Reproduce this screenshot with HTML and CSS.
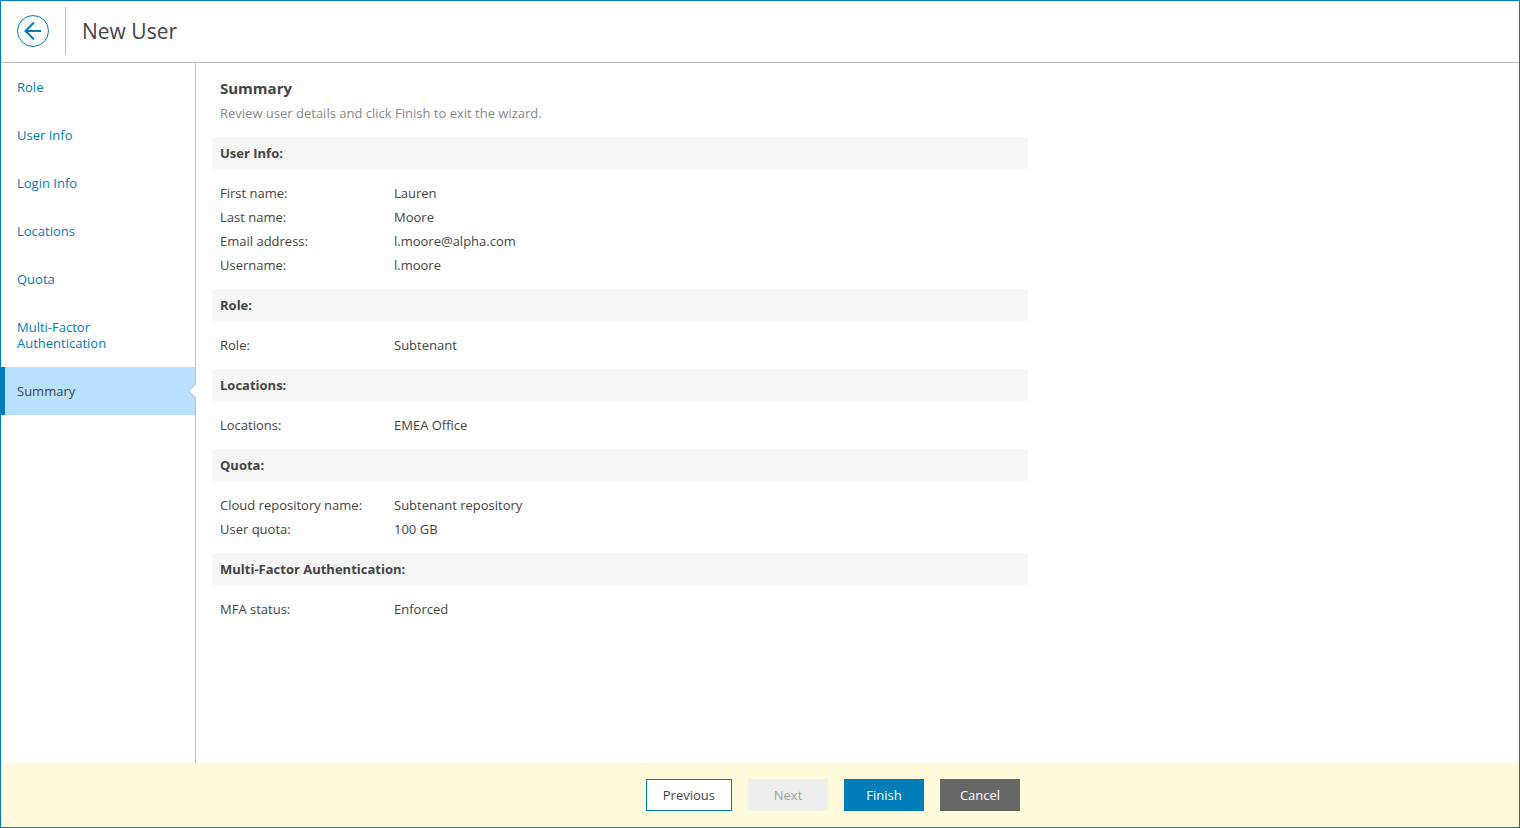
FILE: index.html
```html
<!DOCTYPE html>
<html lang="en">
<head>
  <meta charset="UTF-8" />
  <meta name="viewport" content="width=device-width, initial-scale=1.0" />
  <title>New User</title>
  <link rel="stylesheet" href="styles.css">
</head>
<body>
  <div class="wizard">
    <header class="wizard-header">
      <button type="button" class="back-btn" aria-label="Back">
        <svg width="32" height="32" viewBox="0 0 32 32" fill="none" stroke="currentColor">
          <circle cx="16" cy="16" r="15.5" stroke-width="1" />
          <path d="M24 16H8.500M17 7.500L8.500 16L17 24.500" stroke-width="2" />
        </svg>
      </button>
      <h1>New User</h1>
    </header>

    <div class="wizard-body">
      <nav class="steps">
        <a href="#role">Role</a>
        <a href="#user-info">User Info</a>
        <a href="#login-info">Login Info</a>
        <a href="#locations">Locations</a>
        <a href="#quota">Quota</a>
        <a href="#mfa">Multi-Factor Authentication</a>
        <a href="#summary" class="active" aria-current="step">Summary
          <svg class="pointer" width="8" height="16" viewBox="0 0 8 16">
            <path d="M7.500 1L1 8L7.500 15" fill="#fff" stroke="#c0c0c0" />
            <path d="M7.500 2V14" stroke="#fff" />
          </svg>
        </a>
      </nav>

      <main class="content">
        <h2>Summary</h2>
        <p class="hint">Review user details and click Finish to exit the wizard.</p>

        <section>
          <h3>User Info:</h3>
          <dl>
            <dt>First name:</dt>
            <dd>Lauren</dd>
            <dt>Last name:</dt>
            <dd>Moore</dd>
            <dt>Email address:</dt>
            <dd>l.moore@alpha.com</dd>
            <dt>Username:</dt>
            <dd>l.moore</dd>
          </dl>
        </section>

        <section>
          <h3>Role:</h3>
          <dl>
            <dt>Role:</dt>
            <dd>Subtenant</dd>
          </dl>
        </section>

        <section>
          <h3>Locations:</h3>
          <dl>
            <dt>Locations:</dt>
            <dd>EMEA Office</dd>
          </dl>
        </section>

        <section>
          <h3>Quota:</h3>
          <dl>
            <dt>Cloud repository name:</dt>
            <dd>Subtenant repository</dd>
            <dt>User quota:</dt>
            <dd>100 GB</dd>
          </dl>
        </section>

        <section>
          <h3>Multi-Factor Authentication:</h3>
          <dl>
            <dt>MFA status:</dt>
            <dd>Enforced</dd>
          </dl>
        </section>
      </main>
    </div>

    <footer class="wizard-footer">
      <div class="actions">
        <button type="button" class="btn previous">Previous</button>
        <button type="button" class="btn next" disabled>Next</button>
        <button type="button" class="btn finish">Finish</button>
        <button type="button" class="btn cancel">Cancel</button>
      </div>
    </footer>
  </div>
</body>
</html>
```

FILE: styles.css
```css
* {
  box-sizing: border-box;
}

body {
  margin: 0;
  font-family: "Open Sans", "Noto Sans", sans-serif;
  font-size: 13px;
  line-height: 16px;
  color: #444;
  background-color: #fff;
}

h1, h2, h3, p, dl, dd {
  margin: 0;
}

.wizard {
  display: flex;
  flex-direction: column;
  min-height: 100vh;
  border: 1px solid #007db8;
}

/* Header */
.wizard-header {
  display: flex;
  align-items: center;
  padding: 6px 16px 7px;
  border-bottom: 1px solid #c0c0c0;
}

.back-btn {
  display: flex;
  margin-right: 16px;
  padding: 0;
  border: none;
  background: none;
  color: #007db8;
  cursor: pointer;
}

.wizard-header h1 {
  padding-left: 16px;
  border-left: 1px solid #c0c0c0;
  font-size: 21px;
  font-weight: normal;
  line-height: 48px;
}

/* Step list */
.wizard-body {
  display: flex;
  flex: 1;
}

.steps {
  flex: none;
  width: 195px;
  border-right: 1px solid #c0c0c0;
}

.steps a {
  display: block;
  padding: 16px 80px 16px 16px;
  color: #007db8;
  text-decoration: none;
}

.steps .active {
  position: relative;
  padding-left: 12px;
  border-left: 4px solid #007db8;
  background-color: #b8e0ff;
  color: #444;
}

.pointer {
  position: absolute;
  top: 16px;
  right: -1px;
}

/* Summary */
.content {
  flex: 1;
  max-width: 848px;
  padding: 16px;
}

.content h2 {
  padding: 0 8px;
  font-size: 15px;
  line-height: 18px;
}

.hint {
  padding: 8px 8px 16px;
  color: #888;
}

.content h3 {
  padding: 8px;
  background-color: #f6f6f6;
  font-size: 13px;
}

.content dl {
  display: grid;
  grid-template-columns: 174px 1fr;
  padding: 12px 8px;
  line-height: 24px;
}

/* Footer */
.wizard-footer {
  padding: 16px 16px 16px 211px;
  background-color: #fffadc;
}

.actions {
  display: flex;
  justify-content: flex-end;
  gap: 16px;
  max-width: 816px;
  padding-right: 8px;
}

.btn {
  min-width: 80px;
  height: 32px;
  padding: 0 16px;
  border: 1px solid transparent;
  font: inherit;
  cursor: pointer;
}

.previous {
  border-color: #007db8;
  background-color: #fff;
  color: #444;
}

.next {
  background-color: #eee;
  color: #a0a0a0;
  cursor: default;
}

.finish {
  background-color: #007db8;
  color: #fff;
}

.cancel {
  background-color: #666;
  color: #fff;
}
```
